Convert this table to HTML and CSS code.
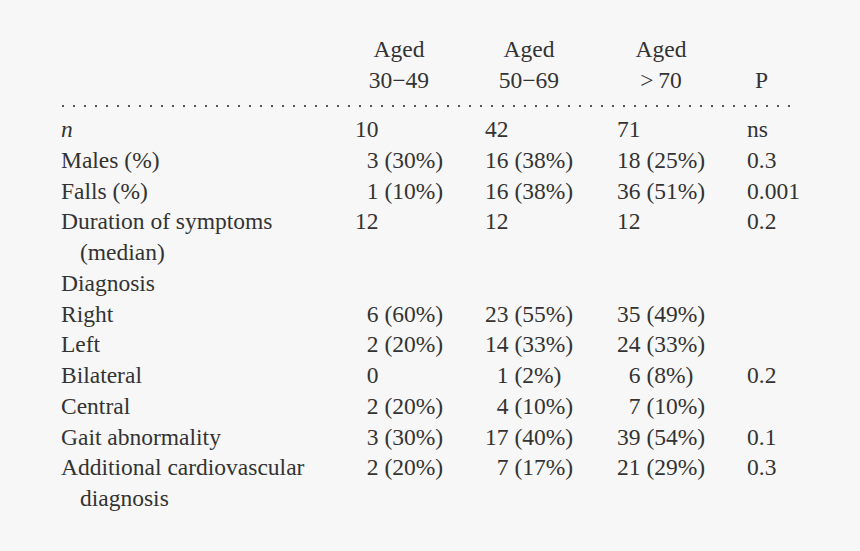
FILE: index.html
```html
<!DOCTYPE html>
<html lang="en">
<head>
<meta charset="utf-8">
<link rel="stylesheet" href="styles.css">
</head>
<body>
<div class="table">
  <div class="cell"></div>
  <div class="cell head">Aged<br>30−49</div>
  <div class="cell head">Aged<br>50−69</div>
  <div class="cell head">Aged<br>&gt;&thinsp;70</div>
  <div class="cell head-p">P</div>

  <div class="rule"></div>

  <div class="cell label"><i>n</i></div>
  <div class="cell">10</div>
  <div class="cell">42</div>
  <div class="cell">71</div>
  <div class="cell">ns</div>

  <div class="cell label">Males (%)</div>
  <div class="cell pad">3 (30%)</div>
  <div class="cell">16 (38%)</div>
  <div class="cell">18 (25%)</div>
  <div class="cell">0.3</div>

  <div class="cell label">Falls (%)</div>
  <div class="cell pad">1 (10%)</div>
  <div class="cell">16 (38%)</div>
  <div class="cell">36 (51%)</div>
  <div class="cell">0.001</div>

  <div class="cell label">Duration of symptoms (median)</div>
  <div class="cell">12</div>
  <div class="cell">12</div>
  <div class="cell">12</div>
  <div class="cell">0.2</div>

  <div class="cell label">Diagnosis</div>
  <div class="cell"></div>
  <div class="cell"></div>
  <div class="cell"></div>
  <div class="cell"></div>

  <div class="cell label">Right</div>
  <div class="cell pad">6 (60%)</div>
  <div class="cell">23 (55%)</div>
  <div class="cell">35 (49%)</div>
  <div class="cell"></div>

  <div class="cell label">Left</div>
  <div class="cell pad">2 (20%)</div>
  <div class="cell">14 (33%)</div>
  <div class="cell">24 (33%)</div>
  <div class="cell"></div>

  <div class="cell label">Bilateral</div>
  <div class="cell pad">0</div>
  <div class="cell pad">1 (2%)</div>
  <div class="cell pad">6 (8%)</div>
  <div class="cell">0.2</div>

  <div class="cell label">Central</div>
  <div class="cell pad">2 (20%)</div>
  <div class="cell pad">4 (10%)</div>
  <div class="cell pad">7 (10%)</div>
  <div class="cell"></div>

  <div class="cell label">Gait abnormality</div>
  <div class="cell pad">3 (30%)</div>
  <div class="cell">17 (40%)</div>
  <div class="cell">39 (54%)</div>
  <div class="cell">0.1</div>

  <div class="cell label">Additional cardiovascular diagnosis</div>
  <div class="cell pad">2 (20%)</div>
  <div class="cell pad">7 (17%)</div>
  <div class="cell">21 (29%)</div>
  <div class="cell">0.3</div>
</div>
</body>
</html>
```
FILE: styles.css
```css
html, body {
  margin: 0;
  padding: 0;
  background: #f7f7f7;
}

body {
  font-family: "Liberation Serif", "Times New Roman", serif;
  font-size: 23.5px;
  line-height: 30.75px;
  color: #333333;
}

.table {
  display: grid;
  grid-template-columns: 294px 130px 132px 130px 1fr;
  padding: 34px 0 0 61px;
}

.cell {
  white-space: nowrap;
}

.label {
  white-space: normal;
  padding-left: 19px;
  text-indent: -19px;
}

.head {
  width: 88px;
  text-align: center;
}

.head-p {
  align-self: end;
  padding-left: 8px;
}

.pad {
  padding-left: 0.5em;
}

.rule {
  grid-column: 1 / -1;
  width: 730px;
  height: 2px;
  margin: 9.8px 0 6.8px 1px;
  background: linear-gradient(to right, #555555 2px, transparent 2px) 0 0 / 11px 2px repeat-x;
}
```
